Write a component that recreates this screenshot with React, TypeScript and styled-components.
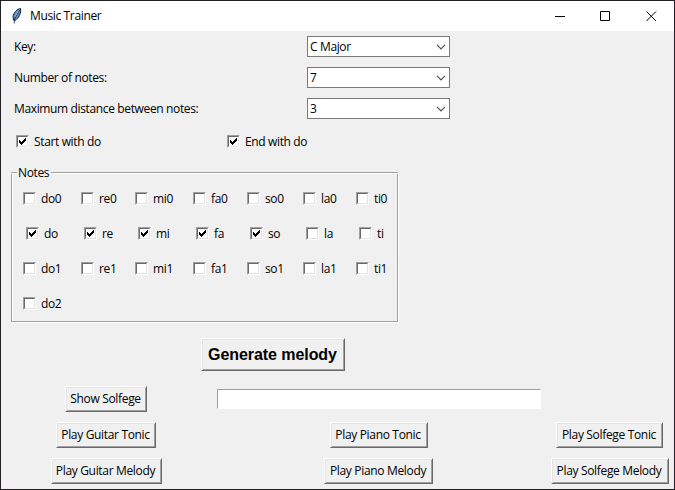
import React, { useState } from 'react';
import styled, { createGlobalStyle } from 'styled-components';

const GlobalStyle = createGlobalStyle`
  *, *::before, *::after { box-sizing: border-box; }
  html, body { margin: 0; padding: 0; }
  body { background: #f0f0f0; overflow: hidden; }
`;

const AppWindow = styled.main`
  display: flex;
  flex-direction: column;
  width: 675px;
  height: 490px;
  border: 1px solid #221f22;
  background: #f0f0f0;
  color: #000;
  font: 12px/16px 'Open Sans', 'Noto Sans', sans-serif;
  letter-spacing: -0.36px;
  white-space: nowrap;
  cursor: default;
`;

const TitleBar = styled.header`
  display: flex;
  align-items: center;
  flex: none;
  height: 30px;
  padding-left: 9px;
  background: #fff;
`;

const Title = styled.h1`
  flex: 1;
  margin: 0 0 0 6px;
  font: inherit;
`;

const Control = styled.button`
  display: flex;
  align-items: center;
  justify-content: center;
  width: 45px;
  height: 29px;
  padding: 0;
  border: 0;
  background: transparent;
  &:last-child { width: 46px; }
`;

const FormRow = styled.label`
  display: grid;
  grid-template-columns: 293px 143px;
  align-items: center;
  height: 31px;
  padding-left: 13px;
`;

const Combo = styled.div`
  display: flex;
  align-items: center;
  justify-content: space-between;
  height: 21px;
  padding: 0 3px 0 2px;
  border: 1px solid #7a7a7a;
  background: #fff;
`;

const Options = styled.div`
  display: grid;
  grid-template-columns: 211px auto;
  align-items: center;
  height: 35px;
  padding-left: 15px;
`;

const CheckLabel = styled.div<{ $indent: number }>`
  display: flex;
  align-items: center;
  gap: 5px;
  height: 17px;
  padding-left: ${(p) => p.$indent}px;
  line-height: 17px;
`;

const CheckBox = styled.span`
  display: block;
  flex: none;
  width: 13px;
  height: 13px;
  border: 1px solid;
  border-color: #a0a0a0 #fff #fff #a0a0a0;
`;

const CheckWell = styled.span`
  display: block;
  width: 11px;
  height: 11px;
  border: 1px solid;
  border-color: #696969 #e3e3e3 #e3e3e3 #696969;
  background: #fff;
  svg { display: block; }
`;

const NotesFrame = styled.section`
  width: 387px;
  height: 158px;
  margin: 6px 0 0 10px;
`;

const FrameTop = styled.div`
  display: flex;
  align-items: center;
  height: 16px;
`;

const FrameLine = styled.span<{ $w?: number }>`
  ${(p) => (p.$w ? `width: ${p.$w}px;` : 'flex: 1;')}
  height: 2px;
  border-top: 1px solid #a0a0a0;
  border-bottom: 1px solid #fff;
`;

const FrameTitle = styled.span`
  width: 34px;
  padding-left: 1px;
`;

const FrameBody = styled.div`
  height: 149px;
  margin-top: -8px;
  padding: 17px 0 0 11px;
  border: 1px solid #a0a0a0;
  border-top: 0;
  box-shadow: inset 1px 0 #fff, 1px 1px #fff;
`;

const NoteRow = styled.div<{ $wide?: boolean }>`
  display: grid;
  grid-template-columns: 58px 54px 58px 54px 56px 53px 40px;
  align-items: center;
  height: 17px;
  margin-bottom: 18px;
`;

const Actions = styled.div`
  display: grid;
  grid-template-columns: 210px 335px 127px;
  align-items: center;
  justify-items: center;
  height: 36px;
`;

const GenerateArea = styled.div`
  display: flex;
  height: 58px;
  padding: 15px 0 0 200px;
`;

const PushButton = styled.button<{ $w: number; $large?: boolean }>`
  width: ${(p) => p.$w}px;
  height: ${(p) => (p.$large ? 33 : 26)}px;
  padding: 0 1px 0 0;
  border: 1px solid;
  border-color: #fff #696969 #696969 #fff;
  border-radius: 0;
  background: #f0f0f0;
  box-shadow: inset 1px 1px #e3e3e3, inset -1px -1px #a0a0a0;
  color: #000;
  font: ${(p) => (p.$large ? "bold 16px/20px 'Liberation Sans', Arial, sans-serif" : 'inherit')};
  letter-spacing: ${(p) => (p.$large ? '-0.07px' : '-0.33px')};
  white-space: nowrap;
`;

const Entry = styled.input`
  width: 324px;
  height: 20px;
  padding: 0 2px;
  border: 1px solid;
  border-color: #a0a0a0 #fff #fff #a0a0a0;
  border-radius: 0;
  outline: 0;
  background: #fff;
  font: inherit;
`;

const FeatherIcon = () => (
  <svg width="14" height="18" viewBox="0 0 14 18">
    <path d="M10.5 1.5C7 2 3.5 6 3 9.500L3.500 13L5 13.500C8.500 11.500 11.500 6 10.500 1.500Z" fill="#5b92d2" stroke="#14202e" strokeWidth="1" />
    <path d="M8.700 4L5.300 10" stroke="#a6cdf5" strokeWidth="1.200" />
    <path d="M9.500 3.500L4.300 12.500V16.500" fill="none" stroke="#111c2b" strokeWidth=".8" />
  </svg>
);

const ChevronIcon = () => (
  <svg width="10" height="6" viewBox="0 0 10 6">
    <path d="M1 .8L5 4.800L9 .8" fill="none" stroke="#505050" strokeWidth="1.200" />
  </svg>
);

const TickIcon = () => (
  <svg width="9" height="9" viewBox="0 0 9 9" shapeRendering="crispEdges">
    <path d="M1 3h1v1h1v1h1v-1h1v-1h1v-1h1v-1h1v3h-1v1h-1v1h-1v1h-1v1h-1v-1h-1v-1h-1z" fill="#000" />
  </svg>
);

const MinimizeIcon = () => (
  <svg width="11" height="11"><path d="M0 5.500H10" stroke="#000" /></svg>
);
const MaximizeIcon = () => (
  <svg width="11" height="11"><path d="M.5.5H9.500V9.500H.5Z" fill="none" stroke="#000" /></svg>
);
const CloseIcon = () => (
  <svg width="11" height="11"><path d="M.5.5L10 10M10 .5L.5 10" stroke="#000" /></svg>
);

type CheckProps = { label: string; initial?: boolean; indent?: number };

function Check({ label, initial = false, indent = 0 }: CheckProps) {
  const [on, setOn] = useState(initial);
  return (
    <CheckLabel $indent={indent} role="checkbox" aria-checked={on} onClick={() => setOn(!on)}>
      <CheckBox>
        <CheckWell>{on && <TickIcon />}</CheckWell>
      </CheckBox>
      <span>{label}</span>
    </CheckLabel>
  );
}

const fields = [
  ['Key:', 'C Major'],
  ['Number of notes:', '7'],
  ['Maximum distance between notes:', '3'],
];

const noteRows = [
  ['do0', 're0', 'mi0', 'fa0', 'so0', 'la0', 'ti0'],
  ['do', 're', 'mi', 'fa', 'so', 'la', 'ti'],
  ['do1', 're1', 'mi1', 'fa1', 'so1', 'la1', 'ti1'],
  ['do2'],
];
const selected = new Set(['do', 're', 'mi', 'fa', 'so']);

export default function App() {
  return (
    <>
      <GlobalStyle />
      <AppWindow>
        <TitleBar>
          <FeatherIcon />
          <Title>Music Trainer</Title>
          <Control aria-label="Minimize"><MinimizeIcon /></Control>
          <Control aria-label="Maximize"><MaximizeIcon /></Control>
          <Control aria-label="Close"><CloseIcon /></Control>
        </TitleBar>
        {fields.map(([label, value]) => (
          <FormRow key={label}>
            <span>{label}</span>
            <Combo><span>{value}</span><ChevronIcon /></Combo>
          </FormRow>
        ))}
        <Options>
          <Check label="Start with do" initial />
          <Check label="End with do" initial />
        </Options>
        <NotesFrame>
          <FrameTop>
            <FrameLine $w={6} />
            <FrameTitle>Notes</FrameTitle>
            <FrameLine />
          </FrameTop>
          <FrameBody>
            {noteRows.map((row, i) => (
              <NoteRow key={i}>
                {row.map((n) => (
                  <Check key={n} label={n} initial={selected.has(n)} indent={i === 1 ? 3 : 0} />
                ))}
              </NoteRow>
            ))}
          </FrameBody>
        </NotesFrame>
        <GenerateArea><PushButton $w={144} $large>Generate melody</PushButton></GenerateArea>
        <Actions>
          <PushButton $w={82}>Show Solfege</PushButton>
          <Entry aria-label="Solfege" />
        </Actions>
        <Actions>
          <PushButton $w={100}>Play Guitar Tonic</PushButton>
          <PushButton $w={98}>Play Piano Tonic</PushButton>
          <PushButton $w={107}>Play Solfege Tonic</PushButton>
        </Actions>
        <Actions>
          <PushButton $w={111}>Play Guitar Melody</PushButton>
          <PushButton $w={109}>Play Piano Melody</PushButton>
          <PushButton $w={118}>Play Solfege Melody</PushButton>
        </Actions>
      </AppWindow>
    </>
  );
}
